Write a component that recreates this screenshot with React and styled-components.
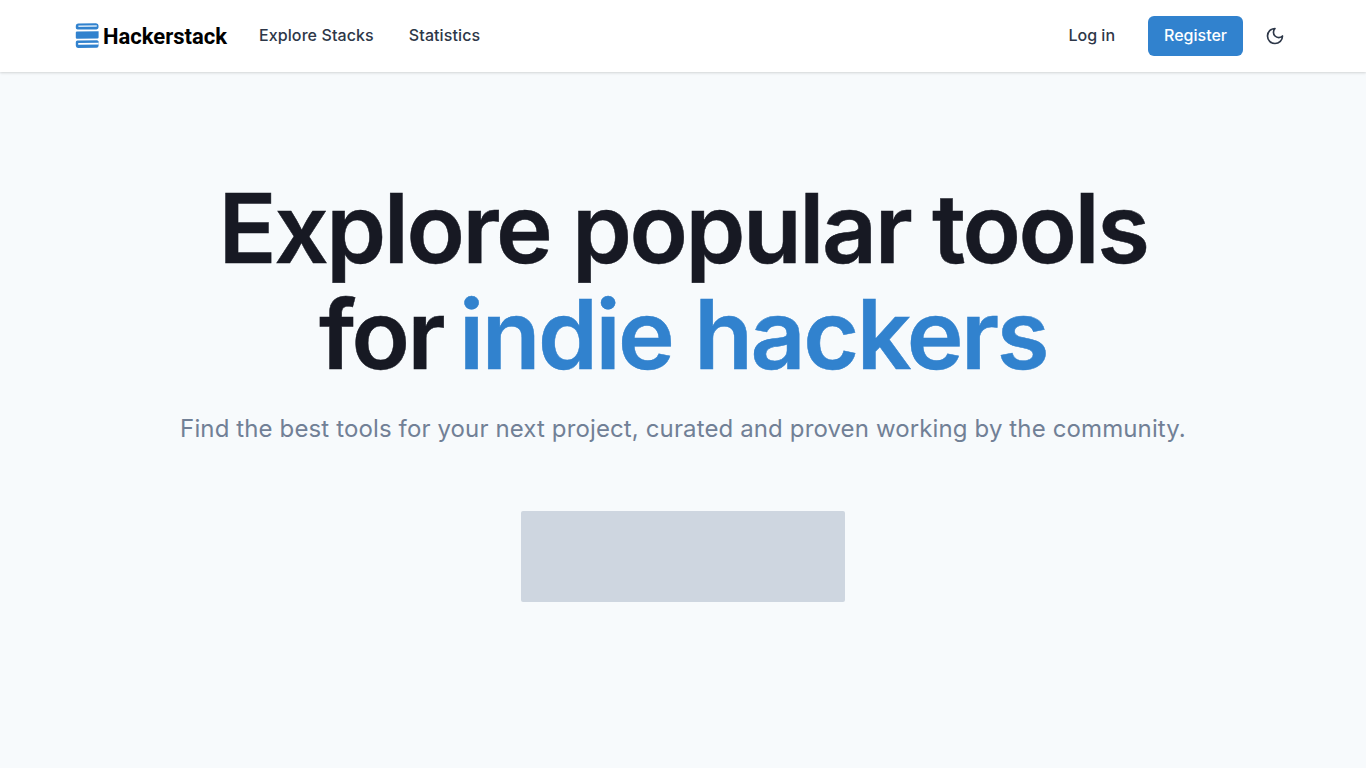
import styled, { createGlobalStyle } from "styled-components";

const GlobalStyle = createGlobalStyle`
  html, body { margin:0; padding:0; background:#F7FAFC; }
  body { font-family:"Inter", "Liberation Sans", sans-serif; color:#171923; }
  * { box-sizing:border-box; }
`;

function App() {
  return (
    <>
      <GlobalStyle />
      <Page>
        <Navbar>
          <NavLeft>
            <Logo href="#">
              <svg width="24" height="26" viewBox="0 0 24 26" fill="none">
                <path d="M3 0.6 L21 0.2 Q23.5 0.4 23.5 2.4 L23.5 4.6 Q23.5 6.4 21.5 6.4 L2.6 6.6 Q0.8 6.6 0.8 4.8 L0.8 2.8 Q0.8 0.8 3 0.6 Z" fill="#3182CE" />
                <path d="M3.4 2.5 L21.8 2.2 L21.8 3.8 L3.4 4.1 Z" fill="#D6E8F7" />
                <path d="M0.8 9.4 Q0.8 8.4 2 8.4 L23.6 8.2 L23.6 14.6 Q23.6 15.6 22.4 15.6 L2 15.8 Q0.8 15.8 0.8 14.8 Z" fill="#3182CE" />
                <path d="M2.4 17.6 L22.2 17.3 L23.6 18.2 L23.6 22.6 Q23.6 24.8 21.6 24.8 L3 25 Q0.8 25 0.8 22.6 L0.8 19.2 Q0.8 17.7 2.4 17.6 Z" fill="#3182CE" />
                <path d="M3.2 20 L23.6 19.8 L23.6 21.4 L3.2 21.7 Z" fill="#fff" />
              </svg>
              <LogoText>Hackerstack</LogoText>
            </Logo>
            <NavLinks>
              <NavLink href="#">Explore Stacks</NavLink>
              <NavLink href="#">Statistics</NavLink>
            </NavLinks>
          </NavLeft>
          <NavRight>
            <GhostButton>Log in</GhostButton>
            <PrimaryButton>Register</PrimaryButton>
            <IconButton aria-label="Toggle theme">
              <svg width="20" height="20" viewBox="0 0 24 24" fill="none" stroke="#2D3748" strokeWidth="2" strokeLinecap="round" strokeLinejoin="round">
                <path d="M12 3a6 6 0 0 0 9 9 9 9 0 1 1-9-9Z" />
              </svg>
            </IconButton>
          </NavRight>
        </Navbar>
        <Hero>
          <Title>
            Explore popular tools
            <br />
            for <Accent>indie hackers</Accent>
          </Title>
          <Subtitle>Find the best tools for your next project, curated and proven working by the community.</Subtitle>
          <Placeholder />
        </Hero>
      </Page>
    </>
  );
}

const Page = styled.div`
  min-height:768px;
  background:#F7FAFC;
`;

const Navbar = styled.header`
  height:72px;
  background:#fff;
  box-shadow:0 1px 3px rgba(0,0,0,0.1), 0 1px 2px rgba(0,0,0,0.06);
  display:flex;
  align-items:center;
  justify-content:space-between;
  padding:0 71px 0 75px;
`;

const NavLeft = styled.div`
  display:flex;
  align-items:center;
  gap:32px;
`;

const Logo = styled.a`
  display:flex;
  align-items:center;
  gap:4px;
  text-decoration:none;
  color:#000;
`;

const LogoText = styled.span`
  font-family:"Roboto", "Inter", sans-serif;
  font-size:22px;
  font-weight:700;
`;

const NavLinks = styled.nav`
  display:flex;
  align-items:center;
  gap:35px;
  padding-bottom:2px;
`;

const NavLink = styled.a`
  font-size:16px;
  font-weight:500;
  color:#2D3748;
  text-decoration:none;
  letter-spacing:0.1px;
`;

const NavRight = styled.div`
  display:flex;
  align-items:center;
  gap:12px;
`;

const BaseButton = styled.button`
  height:40px;
  border:none;
  border-radius:6px;
  font-family:"Inter", sans-serif;
  font-size:16px;
  font-weight:500;
  cursor:pointer;
  padding:0 16px 2px;
`;

const GhostButton = styled(BaseButton)`
  background:transparent;
  color:#2D3748;
  margin-right:5px;
`;

const PrimaryButton = styled(BaseButton)`
  background:#3182CE;
  color:#fff;
`;

const IconButton = styled(BaseButton)`
  width:40px;
  padding:0;
  background:transparent;
  display:flex;
  align-items:center;
  justify-content:center;
`;

const Hero = styled.main`
  display:flex;
  flex-direction:column;
  align-items:center;
  padding-top:103px;
  text-align:center;
`;

const Title = styled.h1`
  margin:0;
  font-size:96px;
  font-weight:600;
  line-height:106px;
  color:#171923;
  letter-spacing:-0.0255em;
  -webkit-text-stroke:0.5px currentColor;
`;

const Accent = styled.span`
  color:#3182CE;
  margin-left:-6px;
`;

const Subtitle = styled.p`
  margin:24px 0 0;
  font-size:24px;
  line-height:36px;
  color:#718096;
  white-space:nowrap;
  letter-spacing:0.125px;
`;

const Placeholder = styled.div`
  width:324px;
  height:91px;
  margin-top:64px;
  background:#CED6E0;
  border-radius:2px;
`;

export default App;
